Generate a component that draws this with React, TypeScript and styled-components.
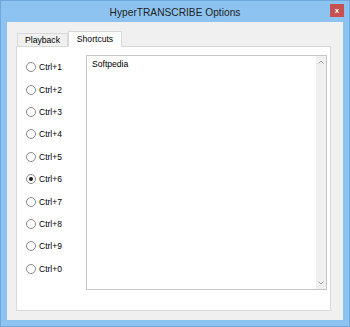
import styled, { createGlobalStyle } from "styled-components";

const GlobalStyle = createGlobalStyle`
  body {
    margin: 0;
    font-family: "Liberation Sans", Arial, sans-serif;
  }
`;

const Window = styled.div`
  width: 350px;
  height: 327px;
  box-sizing: border-box;
  background: #8dc3f0;
  border: 1px solid #6fa8dc;
  padding: 0 6px 6px;
  display: flex;
  flex-direction: column;
`;

const TitleBar = styled.div`
  height: 21px;
  position: relative;
  display: flex;
  align-items: center;
  justify-content: center;
`;

const Title = styled.span`
  font-size: 10.2px;
  color: #1e1e1e;
  padding-top: 1px;
`;

const CloseButton = styled.div`
  position: absolute;
  right: -1px;
  top: 3px;
  width: 14px;
  height: 13px;
  background: #c75050;
  color: #fff;
  font-size: 8px;
  font-weight: bold;
  display: flex;
  align-items: center;
  justify-content: center;
`;

const Client = styled.div`
  flex: 1;
  background: #f0f0f0;
  padding: 9px 12px 9px 9px;
  display: flex;
  flex-direction: column;
`;

const TabStrip = styled.div`
  height: 15px;
  display: flex;
  align-items: flex-end;
  padding-left: 1px;
  position: relative;
  z-index: 1;
`;

const Tab = styled.div<{ $active?: boolean }>`
  box-sizing: border-box;
  height: ${(p) => (p.$active ? "16px" : "13px")};
  margin-bottom: ${(p) => (p.$active ? "-1px" : "0")};
  width: ${(p) => (p.$active ? "54px" : "51px")};
  border: 1px solid #d9d9d9;
  border-bottom: none;
  background: ${(p) => (p.$active ? "#fff" : "#f0f0f0")};
  font-size: 8.6px;
  color: #000;
  display: flex;
  justify-content: center;
  padding-top: ${(p) => (p.$active ? "2px" : "1px")};
`;

const Panel = styled.div`
  flex: 1;
  border: 1px solid #d9d9d9;
  background: #fff;
  display: flex;
  padding: 8px 3px 20px 9px;
`;

const RadioColumn = styled.div`
  width: 60px;
  display: flex;
  flex-direction: column;
  padding-top: 1px;
`;

const RadioRow = styled.label`
  height: 22.4px;
  display: flex;
  align-items: center;
  gap: 3px;
  font-size: 8.5px;
  color: #000;
`;

const RadioCircle = styled.span<{ $checked?: boolean }>`
  box-sizing: border-box;
  width: 10px;
  height: 10px;
  border-radius: 50%;
  border: 1px solid #8a8a8a;
  background: #fff;
  display: flex;
  align-items: center;
  justify-content: center;

  &::after {
    content: "";
    width: 4px;
    height: 4px;
    border-radius: 50%;
    background: ${(p) => (p.$checked ? "#1a1a1a" : "transparent")};
  }
`;

const TextBox = styled.div`
  flex: 1;
  border: 1px solid #c5c5c5;
  display: flex;
`;

const TextArea = styled.div`
  flex: 1;
  padding: 3px 5px;
  font-size: 8.6px;
  color: #000;
`;

const ScrollBar = styled.div`
  width: 10px;
  background: #f0f0f0;
  display: flex;
  flex-direction: column;
  justify-content: space-between;
  align-items: center;
  padding: 4px 0;
`;

const Arrow = ({ down }: { down?: boolean }) => (
  <svg width="6" height="4" viewBox="0 0 6 4">
    <polyline
      points={down ? "0.5,0.5 3,3 5.5,0.5" : "0.5,3.5 3,1 5.5,3.5"}
      fill="none"
      stroke="#a6a6a6"
      strokeWidth="1"
    />
  </svg>
);

const shortcuts = ["1", "2", "3", "4", "5", "6", "7", "8", "9", "0"];

export default function App() {
  return (
    <>
      <GlobalStyle />
      <Window>
        <TitleBar>
          <Title>HyperTRANSCRIBE Options</Title>
          <CloseButton>x</CloseButton>
        </TitleBar>
        <Client>
          <TabStrip>
            <Tab>Playback</Tab>
            <Tab $active>Shortcuts</Tab>
          </TabStrip>
          <Panel>
            <RadioColumn>
              {shortcuts.map((k) => (
                <RadioRow key={k}>
                  <RadioCircle $checked={k === "6"} />
                  <span>Ctrl+{k}</span>
                </RadioRow>
              ))}
            </RadioColumn>
            <TextBox>
              <TextArea>Softpedia</TextArea>
              <ScrollBar>
                <Arrow />
                <Arrow down />
              </ScrollBar>
            </TextBox>
          </Panel>
        </Client>
      </Window>
    </>
  );
}
